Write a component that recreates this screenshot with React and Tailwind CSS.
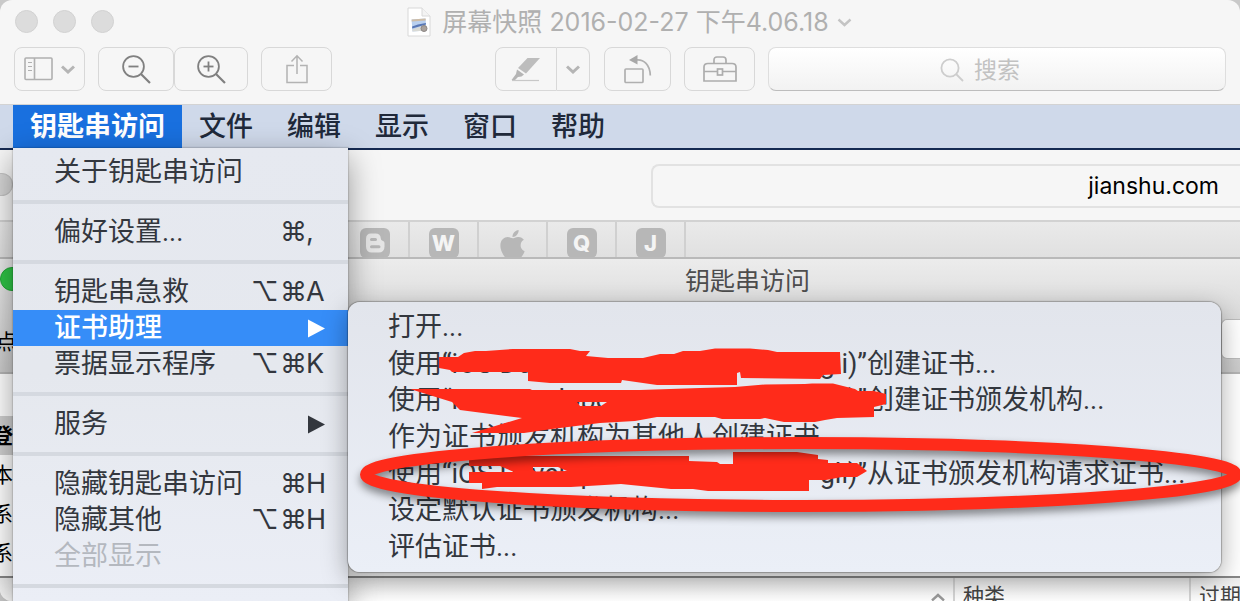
import { FaApple } from "react-icons/fa";

function Chevron({ className, width = 14, stroke = 3 }) {
  return (
    <svg className={className} width={width} height="9" viewBox="0 0 14 9" fill="none" stroke="currentColor" strokeWidth={stroke} aria-hidden="true">
      <path d="M1 1.5 L7 7 L13 1.5" />
    </svg>
  );
}

function SidebarIcon() {
  return (
    <svg width="29" height="24" viewBox="0 0 29 24" fill="none" stroke="#b0b0b0" strokeWidth="1.6" aria-hidden="true">
      <rect x="1" y="1" width="27" height="21.5" rx="1" />
      <path d="M10.5 1 V22" />
      <path d="M4 5.5 H8 M4 9.5 H8 M4 13.5 H8" strokeWidth="1.2" />
    </svg>
  );
}

function ZoomIcon({ plus }) {
  return (
    <svg width="29" height="29" viewBox="0 0 29 29" fill="none" stroke="#808080" aria-hidden="true">
      <circle cx="11.5" cy="11.5" r="10.4" strokeWidth="1.8" />
      <path d="M6.5 11.5 H16.5" strokeWidth="1.8" />
      {plus && <path d="M11.5 6.5 V16.5" strokeWidth="1.8" />}
      <path d="M19 19 L28 28" strokeWidth="2.2" />
    </svg>
  );
}

function ShareIcon() {
  return (
    <svg width="22" height="30" viewBox="0 0 22 30" fill="none" stroke="#b3b3b3" strokeWidth="1.5" aria-hidden="true">
      <path d="M8 11.5 H1 V28.5 H21 V11.5 H14" />
      <path d="M11 20 V2 M5.5 7.5 L11 1.8 L16.5 7.5" />
    </svg>
  );
}

function MarkerIcon() {
  return (
    <svg width="30" height="25" viewBox="0 0 30 25" aria-hidden="true">
      <path d="M16.5 1 H29 L15 16.5 L7 11 Z" fill="#bdbdbd" />
      <path d="M6 12.5 L13 17.5 L10.5 19.5 L7 20 L4 23 L0.5 23 L5 17 Z" fill="#b5b5b5" />
      <path d="M1 23.5 H28" stroke="#c8c8c8" strokeWidth="1.2" />
    </svg>
  );
}

function RotateIcon() {
  return (
    <svg width="28" height="30" viewBox="0 0 28 30" fill="none" stroke="#b0b0b0" strokeWidth="1.7" aria-hidden="true">
      <rect x="1" y="15" width="18" height="13.5" rx="1" />
      <path d="M12 6 C20 5 26 11 26.3 21.5" />
      <path d="M5 6 L13.5 1 V10.5 Z" fill="#a8a8a8" stroke="none" />
    </svg>
  );
}

function ToolboxIcon() {
  return (
    <svg width="34" height="26" viewBox="0 0 34 26" fill="none" stroke="#adadad" strokeWidth="1.7" aria-hidden="true">
      <path d="M11 7 V4 Q11 1 14 1 H20 Q23 1 23 4 V7" />
      <path d="M1 25 V11 Q1 7.500 5 7.500 H29 Q33 7.500 33 11 V25 Z" />
      <path d="M1 15.500 H14.500 M19.500 15.500 H33" />
      <rect x="14.500" y="13" width="5" height="6" />
    </svg>
  );
}

function DocumentIcon() {
  return (
    <svg width="24" height="30" viewBox="0 0 24 30" aria-hidden="true">
      <path d="M1 1 H15 L23 9 V29 H1 Z" fill="#fff" stroke="#d8d8d8" />
      <path d="M15 1 V9 H23" fill="#f3f3f3" stroke="#d8d8d8" />
      <g transform="rotate(-4 12 18)">
        <rect x="5" y="12" width="14" height="12" fill="#b9d0ef" />
        <path d="M5 12 H19 V14 H5 Z" fill="#cdbca6" />
        <path d="M5 19 L11 17.500 L19 16.500 V18 L12 19.500 L5 21 Z" fill="#5877b5" />
        <path d="M5 22 L12 20 L19 19 V24 H5 Z" fill="#d9dad5" />
      </g>
      <circle cx="17" cy="21.500" r="3" fill="#aaa29c" stroke="#8c8785" />
    </svg>
  );
}

const toolButton = "flex h-11 items-center justify-center rounded-lg border border-[#d8d8d8]";

function ViewerHeader() {
  return (
    <header className="rounded-t-xl border-b border-[#d3d3d3] bg-[#f6f6f6] pb-[13px]">
      <div className="flex h-[47px] items-start pt-[10px] pr-[95px] pl-[15px]">
        <div className="flex gap-[15px]">
          {["关闭", "最小化", "缩放"].map((name) => (
            <button key={name} aria-label={name} className="size-[23px] rounded-full border border-[#d2d2d2] bg-[#dcdcdc]" />
          ))}
        </div>
        <h1 className="-mt-1 flex flex-1 items-center justify-center gap-[11px] text-[25px] leading-[32px] text-[#b0b0b0]">
          <DocumentIcon />
          <span className="flex items-center gap-2">
            屏幕快照 2016-02-27 下午4.06.18
            <Chevron className="text-[#c4c4c4]" stroke={2.4} width={15} />
          </span>
        </h1>
      </div>
      <div className="flex px-[14px]">
        <button aria-label="显示方式" className={`${toolButton} w-[71px] gap-2`}>
          <SidebarIcon />
          <Chevron className="text-[#b5b5b5]" />
        </button>
        <button aria-label="缩小" className={`${toolButton} ml-[13px] w-[76px]`}><ZoomIcon /></button>
        <button aria-label="放大" className={`${toolButton} w-[74px]`}><ZoomIcon plus /></button>
        <button aria-label="共享" className={`${toolButton} ml-[13px] w-[71px]`}><ShareIcon /></button>
        <div className="ml-[163px] flex">
          <button aria-label="标记" className={`${toolButton} w-[62px] rounded-r-none`}><MarkerIcon /></button>
          <button aria-label="标记选项" className={`${toolButton} w-[33px] rounded-l-none border-l-0`}>
            <Chevron className="text-[#b5b5b5]" />
          </button>
        </div>
        <button aria-label="旋转" className={`${toolButton} ml-[14px] w-[67px]`}><RotateIcon /></button>
        <button aria-label="工具箱" className={`${toolButton} ml-[13px] w-[71px]`}><ToolboxIcon /></button>
        <label className="ml-[13px] flex h-11 flex-1 items-center justify-center gap-[10px] rounded-lg border border-[#dedede] border-b-[#bdbdbd] bg-gradient-to-b from-white to-[#f2f2f2] pt-px">
          <svg width="24" height="24" viewBox="0 0 24 24" fill="none" stroke="#cdcdcd" strokeWidth="1.8" aria-hidden="true">
            <circle cx="10" cy="10" r="8.600" />
            <path d="M16 16 L23 23" />
          </svg>
          <input type="search" aria-label="搜索" placeholder="搜索" className="w-20 bg-transparent text-[23px] leading-8 outline-none placeholder:text-[#c2c2c2]" />
        </label>
      </div>
    </header>
  );
}

function MenuBar() {
  return (
    <nav className="flex h-[43px] bg-[#cfd9ea] pl-[13px] text-[27px] text-[#20293a]">
      <button className="bg-[#1970df] px-[17px] pt-px font-bold text-white">钥匙串访问</button>
      {["文件", "编辑", "显示", "窗口", "帮助"].map((name) => (
        <button key={name} className="px-[17px] pt-px font-medium">{name}</button>
      ))}
    </nav>
  );
}

function LetterIcon({ children }) {
  return <span className="flex size-[30px] items-center justify-center rounded-md bg-[#b7b7b7] text-[22px] font-extrabold text-[#f4f4f4]">{children}</span>;
}

function BlogIcon() {
  return (
    <svg width="30" height="30" viewBox="0 0 30 30" aria-hidden="true">
      <rect width="30" height="30" rx="6" fill="#b7b7b7" />
      <path d="M11 5.500 H15.500 Q20.500 5.500 20.800 10.500 Q21 12.500 22.500 12.700 Q24.500 13 24.500 15 V18.500 Q24.500 24.500 18.500 24.500 H12 Q6 24.500 6 18.500 V11 Q6 5.500 11 5.500 Z" fill="#e6e6e6" />
      <path d="M11.500 11.500 H15.500 M11.500 18.800 H19" stroke="#b7b7b7" strokeWidth="3" strokeLinecap="round" />
    </svg>
  );
}

function Browser() {
  const tabs = [
    ["blog", <BlogIcon />],
    ["w", <LetterIcon>W</LetterIcon>],
    ["apple", <FaApple size={33} color="#b7b7b7" />],
    ["q", <LetterIcon>Q</LetterIcon>],
    ["j", <LetterIcon>J</LetterIcon>],
  ];
  return (
    <section className="border-t-2 border-[#152a52] bg-[#f6f6f6]">
      <div className="flex h-[70px] items-start pt-[14px]">
        <span className="mt-[9px] h-[23px] w-[13px] rounded-r-full border border-l-0 border-[#c4c4c4] bg-[#d6d6d6]" />
        <input
          aria-label="地址"
          readOnly
          defaultValue="jianshu.com"
          className="ml-[638px] h-11 min-w-0 flex-1 rounded-l-lg border-2 border-r-0 border-[#e2e2e2] bg-[#f6f6f6] pr-[21px] text-right text-[23px] text-black outline-none"
        />
      </div>
      <div className="flex h-[39px] overflow-hidden border-y-2 border-t-[#d2d2d2] border-b-[#b9b9b9] bg-gradient-to-b from-[#eaeaea] to-[#e0e0e0] pl-[341px]">
        {tabs.map(([name, icon]) => (
          <a key={name} href={`#${name}`} aria-label={name} className="flex h-10 w-[69px] items-start justify-center border-r-2 border-[#d0d0d0] pt-[6px]">
            {icon}
          </a>
        ))}
      </div>
    </section>
  );
}

function KeychainWindow() {
  return (
    <section className="flex min-h-0 flex-1 flex-col overflow-hidden rounded-bl-xl bg-white text-black">
      <div className="h-[115px] shrink-0 border-b-2 border-[#b5b5b5] bg-gradient-to-b from-[#ececec] to-[#cbcbcb]">
        <div className="flex h-[60px] items-start pt-1">
          <span className="mt-1 h-6 w-6 rounded-full border border-[#22a637] bg-[#2fc546]" />
          <h2 className="ml-[661px] text-[25px] leading-9 text-[#4d4d4d]">钥匙串访问</h2>
        </div>
        <div className="flex items-start justify-between">
          <span className="-ml-1 pt-2 text-[21px] leading-[30px]">点</span>
          <input aria-label="搜索钥匙串" className="h-10 w-[19px] rounded-l-md border border-r-0 border-[#bcbcbc] bg-white" />
        </div>
      </div>
      <div className="flex h-[204px] shrink-0 border-b-2 border-[#878787]">
        <ul className="w-[200px] pt-[42px] text-[21px] leading-[39px]">
          <li className="bg-[#cfcfcf] font-bold"><span className="-ml-2">登录</span></li>
          <li><span className="-ml-2">本地</span></li>
          <li><span className="-ml-2">系统</span></li>
          <li><span className="-ml-2">系统</span></li>
        </ul>
      </div>
      <div className="flex flex-1 justify-end overflow-hidden bg-gradient-to-b from-[#ededed] to-white text-[21px] leading-8 text-[#444]">
        <Chevron className="mt-[15px] mr-2 rotate-180 text-[#999]" stroke={2.4} />
        <span className="w-[236px] border-l-2 border-[#d4d4d4] pt-[2px] pl-2">种类</span>
        <span className="w-[51px] border-l-2 border-[#d4d4d4] pt-[2px] pl-2 whitespace-nowrap">过期</span>
      </div>
    </section>
  );
}

const menuItems = [
  { label: "关于钥匙串访问" },
  null,
  { label: "偏好设置...", keys: ["", "⌘", ","] },
  null,
  { label: "钥匙串急救", keys: ["⌥", "⌘", "A"] },
  { label: "证书助理", submenu: true, active: true },
  { label: "票据显示程序", keys: ["⌥", "⌘", "K"] },
  null,
  { label: "服务", submenu: true },
  null,
  { label: "隐藏钥匙串访问", keys: ["", "⌘", "H"] },
  { label: "隐藏其他", keys: ["⌥", "⌘", "H"] },
  { label: "全部显示", disabled: true },
  null,
];

function AppMenu() {
  return (
    <div role="menu" className="absolute top-[148px] bottom-0 left-[13px] w-[335px] bg-gradient-to-b from-[#e6e9f0] via-[#e5e8ee] to-[#ebeef6] pt-[6px] font-[Roboto,'Noto_Sans_CJK_SC',sans-serif] text-[27px] text-[#33373e] shadow-[0_10px_30px_rgba(0,0,0,0.4),0_0_1px_1px_rgba(0,0,0,0.12)]">
      {menuItems.map((item, i) =>
        item ? (
          <button
            key={item.label}
            role="menuitem"
            disabled={item.disabled}
            className={`flex h-9 w-full items-center pr-[22px] pl-[41px] leading-9 ${item.active ? "bg-[#368df8] font-medium text-white" : ""} ${item.disabled ? "text-[#b4b8bf]" : ""}`}
          >
            <span>{item.label}</span>
            {item.keys && (
              <kbd className="ml-auto grid grid-cols-[29px_26px_20px] font-[Inter,'DejaVu_Sans',sans-serif]">
                {item.keys.map((key, k) => (
                  <span key={k} className="text-left">{key}</span>
                ))}
              </kbd>
            )}
            {item.submenu && (
              <svg className="ml-auto" width="19" height="19" viewBox="0 0 19 19" fill="currentColor" aria-hidden="true">
                <path d="M1 0.500 L18 9.500 L1 18.500 Z" />
              </svg>
            )}
          </button>
        ) : (
          <div key={i} role="separator" className="my-[10px] h-1 bg-[#d5d9e0]" />
        )
      )}
    </div>
  );
}

const submenuItems = [
  { label: "打开..." },
  { identity: true, label: "创建证书..." },
  { identity: true, label: "创建证书颁发机构..." },
  { label: "作为证书颁发机构为其他人创建证书..." },
  { identity: true, label: "从证书颁发机构请求证书..." },
  { label: "设定默认证书颁发机构..." },
  { label: "评估证书..." },
];

function AssistantMenu() {
  return (
    <div role="menu" className="absolute top-[302px] right-[19px] left-[348px] flex h-[270px] flex-col rounded-xl bg-gradient-to-b from-[#e2e5ec] to-[#ebeff7] py-[7px] font-[Roboto,'Noto_Sans_CJK_SC',sans-serif] text-[27px] text-[#33373e] shadow-[0_8px_26px_rgba(0,0,0,0.35),0_0_1px_1px_rgba(0,0,0,0.25)]">
      {submenuItems.map((item) => (
        <button key={item.label} role="menuitem" className="flex flex-1 items-center pl-10 leading-9 whitespace-nowrap">
          {item.identity && (
            <span className="flex w-[479px] justify-between">
              <span>使用“iOS Developer:</span>
              <span>gli)”</span>
            </span>
          )}
          <span>{item.label}</span>
        </button>
      ))}
    </div>
  );
}

function Markup() {
  return (
    <svg className="pointer-events-none absolute top-0 left-0" width="1240" height="601" viewBox="0 0 1240 601" aria-hidden="true">
      <g fill="#ff2b1a" fillRule="evenodd">
        <path d="M439 357 L458 357 L464 353 L475 351 L486 351 L513 349 L570 349 L580 351 L590 351 L586 356 L608 358 L643 358 L660 354 L674 354 L683 351 L700 351 L715 348.500 L750 348.500 L768 350 L777 352 L840 352 L841 374 L823 375 L820 379 L741 378 L740 372 L737 373 L737 385 L657 385 L622 380 L621 383 L550 383 L528 381 L528 372 L452 372 L450 370 L439 368 Z" />
        <path d="M410 389 H530 L532 390 H640 L700 388 L735 387 L765 384.500 L805 384 L812 383.500 H833 L855 389 L858 391 L874 391 L886 394 V404 L874 407 V417 L837 418 L825 420 L815 422 H784 L765 418 L760 419 H722 L715 417 H657 L635 421 L600 423 L552 429 L524 433 H472 L522 418 L506 416 L460 410 L455 405 L452 402 Z M577 402 L580 406 H601 L607 402 Z" />
        <path d="M469 459 L500 456 H689 V461 L717 462 L720 464 L733 464 V452 H797 L818 455 V459 L828 460 V463 H857 L867 471 L857 477 L842 477 L826 480 L809 480 V491 H708 L693 489 H671 L621 484 L571 487 H497 L482 489 V483 H469 V472 H514 L500 466 H469 Z M533 467 V470 L536 471.500 L567 471 L558 467 Z" />
      </g>
      <ellipse cx="801" cy="474.500" rx="435" ry="31.500" fill="none" stroke="#ff2b1a" strokeWidth="12" className="drop-shadow-[0_5px_4px_rgba(0,0,0,0.45)]" />
    </svg>
  );
}

export default function App() {
  return (
    <main className="relative flex h-screen flex-col overflow-hidden bg-[#c9c9c9] font-[Inter,'Noto_Sans_CJK_SC',sans-serif]">
      <ViewerHeader />
      <MenuBar />
      <Browser />
      <KeychainWindow />
      <AppMenu />
      <AssistantMenu />
      <Markup />
    </main>
  );
}
